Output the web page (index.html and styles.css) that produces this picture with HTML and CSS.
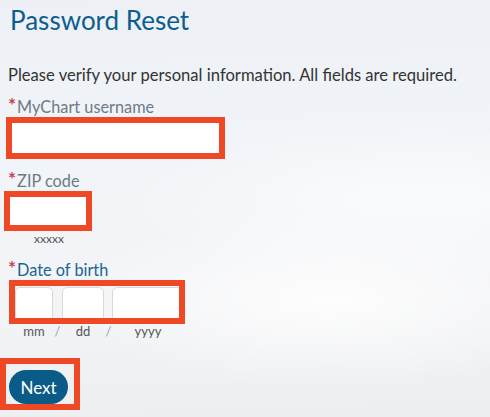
FILE: index.html
```html
<!DOCTYPE html>
<html lang="en">
<head>
<meta charset="utf-8">
<title>Password Reset</title>
<link rel="stylesheet" href="styles.css">
</head>
<body>
<main class="page">
  <h1 class="title">Password Reset</h1>
  <p class="intro">Please verify your personal information. All fields are required.</p>

  <div class="field">
    <label class="label"><span class="req">*</span>MyChart username</label>
    <div class="hl hl-user"><input class="input input-user" type="text"></div>
  </div>

  <div class="field">
    <label class="label"><span class="req">*</span>ZIP code</label>
    <div class="hl hl-zip"><input class="input input-zip" type="text"></div>
    <div class="hint hint-zip">xxxxx</div>
  </div>

  <div class="field field-dob">
    <label class="label label-blue"><span class="req">*</span>Date of birth</label>
    <div class="hl hl-dob">
      <div class="dob-row">
        <input class="dob dob-mm" type="text">
        <input class="dob dob-dd" type="text">
        <input class="dob dob-yy" type="text">
      </div>
    </div>
    <div class="dob-hints">
      <span class="h-mm">mm</span><span class="sep">/</span><span class="h-dd">dd</span><span class="sep">/</span><span class="h-yy">yyyy</span>
    </div>
  </div>

  <div class="hl hl-next"><button class="btn" type="button">Next</button></div>
</main>
</body>
</html>
```

FILE: styles.css
```css
html, body {
  margin: 0;
  padding: 0;
  height: 100%;
}
body {
  font-family: Lato, "Noto Sans", sans-serif;
  color: #333;
  background:
    radial-gradient(ellipse 260px 90px at 330px 300px, rgba(255,255,255,0.85), rgba(255,255,255,0) 100%),
    radial-gradient(ellipse 300px 80px at 420px 200px, rgba(255,255,255,0.7), rgba(255,255,255,0) 100%),
    linear-gradient(178deg, #edf1f6 0%, #f1f4f8 40%, #f3f4f6 70%, #eceef0 100%);
  overflow: hidden;
}
.page {
  padding: 0 0 0 8px;
}
.title {
  margin: 0;
  padding-top: 5px;
  font-size: 26px;
  line-height: 30px;
  font-weight: 400;
  color: #0d5e8c;
  padding-left: 2px;
}
.intro {
  margin: 30px 0 0 0;
  font-size: 16.6px;
  line-height: 20px;
  color: #333;
}
.field {
  margin-top: 12px;
}
.field-dob {
  margin-top: 14px;
}
.label {
  display: block;
  font-size: 16.3px;
  line-height: 20px;
  color: #6f7a86;
}
.label-blue {
  color: #1a6494;
}
.req {
  color: #c9424f;
  font-size: 19px;
  font-weight: 700;
  line-height: 10px;
  margin-right: 1px;
  position: relative;
  top: -1px;
}
.hl {
  border: 6px solid #ef4824;
  box-sizing: border-box;
}
.hl-user {
  width: 219px;
  margin-left: -2px;
}
.hl-zip {
  width: 88px;
  margin-left: -4px;
}
.input {
  display: block;
  border: 0;
  background: #fff;
  margin: 0;
  padding: 0;
  outline: none;
}
.input-user {
  width: 207px;
  height: 30px;
}
.input-zip {
  width: 76px;
  height: 28px;
}
.hint {
  font-size: 12px;
  line-height: 14px;
  color: #555;
}
.hint-zip {
  margin-left: 26px;
  margin-top: 1px;
}
.hl-dob {
  width: 176px;
  height: 44px;
  margin-left: 1px;
  overflow: hidden;
}
.dob-row {
  display: flex;
  gap: 9px;
  margin-top: 1px;
  height: 32px;
}
.dob {
  display: block;
  box-sizing: border-box;
  height: 34px;
  margin: 0;
  padding: 0;
  border: 1px solid #d9d9d9;
  border-radius: 5px;
  background: #fff;
  outline: none;
  flex: none;
}
.dob-mm { width: 38px; }
.dob-dd { width: 42px; }
.dob-yy { width: 70px; margin-left: -1px; }
.dob-hints {
  display: flex;
  font-size: 13px;
  line-height: 14px;
  color: #555;
  margin-top: 0;
  margin-left: 7px;
}
.dob-hints span { text-align: center; }
.h-mm { width: 38px; }
.h-dd { width: 42px; }
.h-yy { width: 70px; }
.sep {
  width: 9px;
  color: #8ea6b8;
}
.hl-next {
  width: 80px;
  margin-left: -8px;
  margin-top: 20px;
  padding: 6px 0 0 3px;
}
.btn {
  display: block;
  width: 59px;
  height: 34px;
  border: 0;
  border-radius: 17px;
  background: #0b5b88;
  color: #fff;
  font-family: Lato, "Noto Sans", sans-serif;
  font-size: 17px;
  padding: 0;
}
```
